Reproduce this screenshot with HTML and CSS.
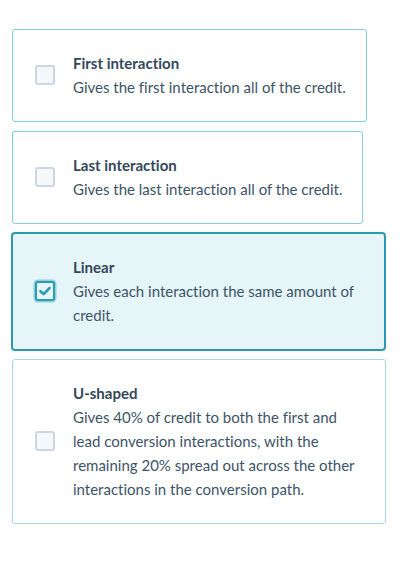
FILE: index.html
```html
<!DOCTYPE html>
<html lang="en">

<head>
    <meta charset="UTF-8">
    <title>Attribution models</title>
    <link rel="stylesheet" href="styles.css">
</head>

<body>
    <div class="model-list">
        <label class="model-card">
            <span class="checkbox"></span>
            <span class="model-text">
                <span class="model-title">First interaction</span>
                <span class="model-desc">Gives the first interaction all of the credit.</span>
            </span>
        </label>

        <label class="model-card">
            <span class="checkbox"></span>
            <span class="model-text">
                <span class="model-title">Last interaction</span>
                <span class="model-desc">Gives the last interaction all of the credit.</span>
            </span>
        </label>

        <label class="model-card selected">
            <span class="checkbox checked">
                <svg viewBox="0 0 16 16" width="14" height="14">
                    <path d="M2.8 8.2 L6.4 11.6 L13.2 4.6" fill="none" stroke="#2d9bb4" stroke-width="3" stroke-linecap="round" stroke-linejoin="round"/>
                </svg>
            </span>
            <span class="model-text">
                <span class="model-title">Linear</span>
                <span class="model-desc">Gives each interaction the same amount of credit.</span>
            </span>
        </label>

        <label class="model-card faded">
            <span class="checkbox"></span>
            <span class="model-text">
                <span class="model-title">U-shaped</span>
                <span class="model-desc">Gives 40% of credit to both the first and lead conversion interactions, with the remaining 20% spread out across the other interactions in the conversion path.</span>
            </span>
        </label>
    </div>
</body>

</html>
```

FILE: styles.css
```css
body {
    margin: 0;
    background: #ffffff;
    color: #33475b;
    font-family: Lato, "Noto Sans", sans-serif;
    font-variant-ligatures: none;
}

.model-list {
    display: flex;
    flex-direction: column;
    align-items: flex-start;
    gap: 9px;
    padding: 29px 0 0 12px;
}

.model-card {
    box-sizing: border-box;
    display: flex;
    align-items: center;
    gap: 18px;
    width: fit-content;
    max-width: 374px;
    padding: 21px 20px 22px 22px;
    border: 1px solid #7fcfdd;
    border-radius: 3px;
    background: #ffffff;
    cursor: pointer;
}

.model-card.faded {
    border-color: #a3dbe5;
}

.model-card.selected {
    max-width: 373px;
    background: #e5f5f8;
    border-color: #2b98b0;
    /* second pixel of the thicker selected border */
    box-shadow: 0 0 0 1px #2b98b0;
}

.checkbox {
    box-sizing: border-box;
    flex: none;
    width: 20px;
    height: 20px;
    border: 2px solid #cbd6e2;
    border-radius: 3px;
    background: #f5f8fa;
    display: flex;
    align-items: center;
    justify-content: center;
}

.checkbox.checked {
    border-color: #2d9bb4;
    background: #e5f5f8;
    box-shadow: 0 0 0 1.5px #8fd0de;
}

.model-text {
    display: flex;
    flex-direction: column;
    font-size: 15px;
    line-height: 24px;
}

.model-title {
    font-weight: bold;
    font-size: 15px;
}

.model-desc {
    color: #3d5468;
}
```
